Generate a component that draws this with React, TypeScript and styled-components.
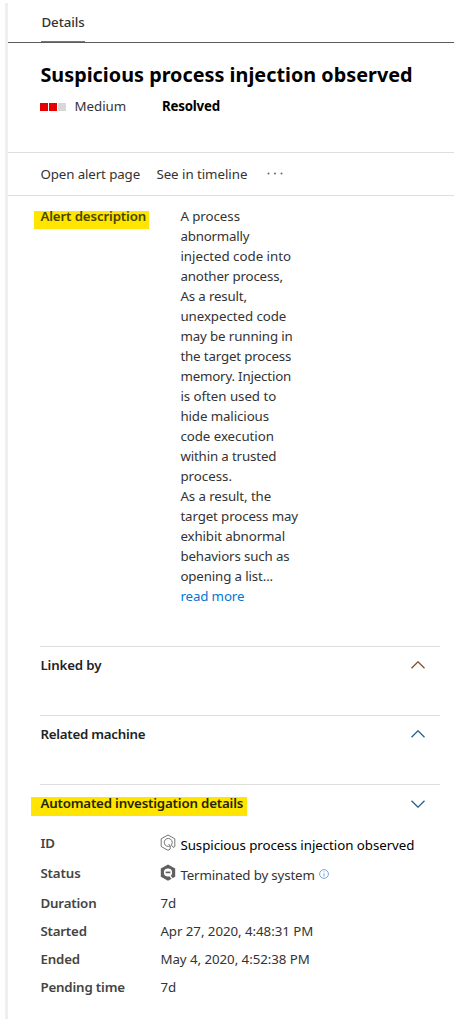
import React from "react";
import styled, { createGlobalStyle } from "styled-components";

const GlobalStyle = createGlobalStyle`
  * { box-sizing: border-box; }
  body {
    margin: 0;
    background: #fff;
    color: #333;
    font: 400 13.3px/20px "Noto Sans", "Open Sans", sans-serif;
  }
`;

const Panel = styled.main`
  width: 449px;
  height: 1016px;
  margin: 3px 0 0 5px;
  border-left: 3px solid #efefef;
  white-space: nowrap;
`;

const Label = styled.span<{ $spacing?: number; $color?: string; $weight?: number }>`
  display: block;
  width: max-content;
  padding-left: 0.4px;
  letter-spacing: ${(p) => p.$spacing ?? 0}px;
  color: ${(p) => p.$color ?? "#333"};
  font-weight: ${(p) => p.$weight ?? 400};
`;

const TabBar = styled.nav`
  height: 40px;
  padding: 9px 0 0 33px;
  border-bottom: 1px solid #5c5c5c;
`;

const Tab = styled.div`
  width: 44px;
  height: 30px;
  border-bottom: 1px solid #4a80bd;
`;

const Header = styled.header`
  height: 109px;
  padding: 18px 0 0 32px;
`;

const Title = styled.h1`
  margin: 0;
  font-size: 19.8px;
  line-height: 28px;
`;

const Severity = styled.div`
  display: flex;
  align-items: center;
  margin-top: 7px;
`;

const Blocks = styled.div`
  display: flex;
  gap: 1px;
  width: 34px;
  padding-top: 1px;
`;

const Block = styled.i<{ $on?: boolean }>`
  width: 8px;
  height: 8px;
  background: ${(p) => (p.$on ? "#e60000" : "#d8d8d8")};
`;

const SeverityName = styled.div`
  width: 87.5px;
`;

const Toolbar = styled.div`
  display: flex;
  height: 44px;
  padding: 11px 0 0 32px;
  border-top: 1px solid #dedede;
  border-bottom: 1px solid #dedede;
`;

const ToolItem = styled.div<{ $width: number }>`
  width: ${(p) => p.$width}px;
`;

const Dots = styled.svg`
  width: 18px;
  height: 18px;
  fill: #666;
`;

const Description = styled.section`
  display: flex;
  height: 450px;
  padding: 10px 0 0 32px;
`;

const DescriptionTerm = styled.div`
  width: 140px;
`;

const Mark = styled.div<{ $width: number; $height: number; $left: number; $top: number }>`
  display: flex;
  width: ${(p) => p.$width}px;
  height: ${(p) => p.$height}px;
  margin: ${(p) => p.$top}px 0 0 -${(p) => p.$left}px;
  padding-left: ${(p) => p.$left}px;
  background: #ffe500;
  & > span { margin-top: -${(p) => p.$top}px; }
`;

const Section = styled.section<{ $height: number }>`
  display: flex;
  justify-content: space-between;
  width: 400px;
  height: ${(p) => p.$height}px;
  margin-left: 32px;
  padding: 8px 15px 0 0;
  border-top: 1px solid #dedede;
`;

const ChevronIcon = styled.svg<{ $down?: boolean }>`
  width: 14px;
  height: 8px;
  margin-top: ${(p) => (p.$down ? 6.5 : 5.7)}px;
  fill: none;
  stroke-width: 1.3;
`;

const Facts = styled.dl`
  margin: 0 0 0 32px;
`;

const Fact = styled.div<{ $height: number }>`
  display: flex;
  height: ${(p) => p.$height}px;
`;

const Term = styled.dt`
  width: 120px;
`;

const Value = styled.dd<{ $drop?: boolean }>`
  display: flex;
  margin: 0;
  padding-top: ${(p) => (p.$drop ? 2 : 0)}px;
`;

const HexIcon = styled.svg`
  width: 16px;
  height: 17px;
  margin: -1px 4px 0 0;
  flex: none;
`;

const InfoIcon = styled.svg`
  width: 10px;
  height: 10px;
  margin: 4px 0 0 4px;
`;

const lines: [string, number][] = [
  ["A process", -0.05],
  ["abnormally", -0.2],
  ["injected code into", -0.02],
  ["another process,", -0.15],
  ["As a result,", -0.15],
  ["unexpected code", -0.06],
  ["may be running in", -0.12],
  ["the target process", -0.15],
  ["memory. Injection", -0.18],
  ["is often used to", -0.04],
  ["hide malicious", -0.1],
  ["code execution", -0.05],
  ["within a trusted", -0.15],
  ["process.", 0],
  ["As a result, the", -0.1],
  ["target process may", -0.12],
  ["exhibit abnormal", -0.12],
  ["behaviors such as", -0.13],
  ["opening a list...", -0.13],
];

const Chevron = ({ down, color }: { down?: boolean; color: string }) => (
  <ChevronIcon $down={down} viewBox="0 0 14 8" stroke={color}>
    <path d={down ? "M.5 .7 7 7.2 13.5 .7" : "M.5 7.3 7 .8 13.5 7.3"} />
  </ChevronIcon>
);

const facts = [
  { name: "Duration", value: "7d", nameSpacing: -0.16, spacing: 0 },
  { name: "Started", value: "Apr 27, 2020, 4:48:31 PM", nameSpacing: -0.2, spacing: -0.05 },
  { name: "Ended", value: "May 4, 2020, 4:52:38 PM", nameSpacing: -0.15, spacing: -0.05 },
  { name: "Pending time", value: "7d", nameSpacing: -0.17, spacing: 0 },
];

export default function App() {
  return (
    <>
      <GlobalStyle />
      <Panel>
        <TabBar>
          <Tab><Label $weight={500} $spacing={-0.05}>Details</Label></Tab>
        </TabBar>
        <Header>
          <Title><Label $color="#000" $weight={700} $spacing={0.02}>Suspicious process injection observed</Label></Title>
          <Severity>
            <Blocks><Block $on /><Block $on /><Block /></Blocks>
            <SeverityName><Label>Medium</Label></SeverityName>
            <Label $color="#000" $weight={700} $spacing={-0.2}>Resolved</Label>
          </Severity>
        </Header>
        <Toolbar>
          <ToolItem $width={116}><Label $spacing={-0.1}>Open alert page</Label></ToolItem>
          <ToolItem $width={110}><Label $spacing={-0.04}>See in timeline</Label></ToolItem>
          <Dots viewBox="0 0 18 18">
            <circle cx="2.5" cy="9.5" r="1" /><circle cx="9" cy="9.5" r="1" /><circle cx="15.5" cy="9.5" r="1" />
          </Dots>
        </Toolbar>
        <Description>
          <DescriptionTerm>
            <Mark $width={115} $height={18} $left={6} $top={5}>
              <Label $weight={600} $color="#474500" $spacing={-0.14}>Alert description</Label>
            </Mark>
          </DescriptionTerm>
          <div>
            {lines.map(([text, spacing]) => <Label key={text} $spacing={spacing}>{text}</Label>)}
            <Label $color="#0078d4" $spacing={-0.12}>read more</Label>
          </div>
        </Description>
        <Section $height={69}>
          <Label $weight={600} $color="#222" $spacing={-0.14}>Linked by</Label>
          <Chevron color="#804f2b" />
        </Section>
        <Section $height={69}>
          <Label $weight={600} $color="#222" $spacing={-0.24}>Related machine</Label>
          <Chevron color="#28618c" />
        </Section>
        <Section $height={49}>
          <Mark $width={216} $height={19} $left={9} $top={4}>
            <Label $weight={600} $color="#252500" $spacing={-0.18}>Automated investigation details</Label>
          </Mark>
          <Chevron down color="#28618c" />
        </Section>
        <Facts>
          <Fact $height={30}>
            <Term><Label $weight={600} $color="#444">ID</Label></Term>
            <Value $drop>
              <HexIcon viewBox="0 0 16 17" fill="none" stroke="#666" strokeWidth=".9">
                <path d="M10 15.2 8 16.3 1.2 12.5V4.8L8 1l6.8 3.8v7.7l-1.6.9" />
                <path d="M10.2 11.9A4 4 0 1 1 11.8 10.2L11.3 11.1l2.1 2.4M8.6 10l1.6 1.9v3.2" />
              </HexIcon>
              <Label $color="#000" $spacing={-0.05}>Suspicious process injection observed</Label>
            </Value>
          </Fact>
          <Fact $height={30}>
            <Term><Label $weight={600} $color="#444" $spacing={-0.12}>Status</Label></Term>
            <Value $drop>
              <HexIcon viewBox="0 0 16 17">
                <path
                  fill="#606060"
                  fillRule="evenodd"
                  d="M8 .4 15.2 4.4v8.3L8 16.8.8 12.7V4.4ZM8 4.4a4.1 4.1 0 1 0 0 8.2 4.1 4.1 0 0 0 0-8.2Z"
                />
                <path fill="none" stroke="#fff" strokeWidth="1.3" d="m9.6 11.5 3.6 4.2" />
                <path fill="none" stroke="#606060" strokeWidth="1.7" d="M5.6 8.4h4.8" />
              </HexIcon>
              <Label $spacing={-0.15}>Terminated by system</Label>
              <InfoIcon viewBox="0 0 10 10" fill="none" stroke="#6b9bd1" strokeWidth=".9">
                <circle cx="5" cy="5" r="4.4" /><path d="M5 4.3v3.2M5 2.3v1" />
              </InfoIcon>
            </Value>
          </Fact>
          {facts.map((f) => (
            <Fact key={f.name} $height={28}>
              <Term><Label $weight={600} $color="#444" $spacing={f.nameSpacing}>{f.name}</Label></Term>
              <Value><Label $spacing={f.spacing}>{f.value}</Label></Value>
            </Fact>
          ))}
        </Facts>
      </Panel>
    </>
  );
}
